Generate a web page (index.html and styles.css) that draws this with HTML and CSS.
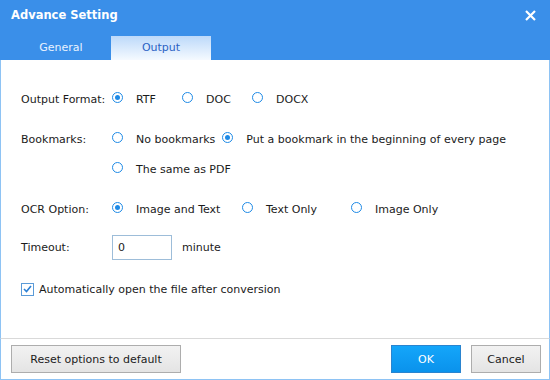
FILE: index.html
```html
<!DOCTYPE html>
<html>
<head>
<meta name="viewport" content="width=device-width, initial-scale=1">
<link rel="stylesheet" href="styles.css">
</head>
<body>
<div class="dialog">
  <div class="header">
    <div class="titlebar">
      <span class="title">Advance Setting</span>
      <svg class="close" width="11" height="11" viewBox="0 0 11 11"><path d="M1 1 L10 10 M10 1 L1 10" stroke="#fff" stroke-width="2.2"/></svg>
    </div>
    <div class="tabs">
      <div class="tab">General</div>
      <div class="tab active">Output</div>
    </div>
  </div>

  <div class="content">
    <div class="row row-format">
      <div class="label">Output Format:</div>
      <div class="opt"><span class="radio checked"></span>RTF</div>
      <div class="opt"><span class="radio"></span>DOC</div>
      <div class="opt"><span class="radio"></span>DOCX</div>
    </div>

    <div class="row row-bookmarks">
      <div class="label">Bookmarks:</div>
      <div class="opt opt-none"><span class="radio"></span>No bookmarks</div>
      <div class="opt"><span class="radio checked"></span>Put a bookmark in the beginning of every page</div>
    </div>
    <div class="row row-sub">
      <div class="label"></div>
      <div class="opt"><span class="radio"></span>The same as PDF</div>
    </div>

    <div class="row row-ocr">
      <div class="label">OCR Option:</div>
      <div class="opt opt-both"><span class="radio checked"></span>Image and Text</div>
      <div class="opt opt-text"><span class="radio"></span>Text Only</div>
      <div class="opt"><span class="radio"></span>Image Only</div>
    </div>

    <div class="row row-timeout">
      <div class="label">Timeout:</div>
      <input class="num" type="text" value="0">
      <span class="unit">minute</span>
    </div>

    <div class="row row-check">
      <span class="check">
        <svg width="9" height="8" viewBox="0 0 9 8"><path d="M1 4 L3.5 6.5 L8 1" stroke="#2a7fd4" stroke-width="1.6" fill="none"/></svg>
      </span>
      Automatically open the file after conversion
    </div>
  </div>

  <div class="footer">
    <button class="btn btn-reset">Reset options to default</button>
    <div class="spacer"></div>
    <button class="btn btn-ok">OK</button>
    <button class="btn btn-cancel">Cancel</button>
  </div>
</div>
</body>
</html>
```

FILE: styles.css
```css
body {
  margin: 0;
  font-family: "DejaVu Sans", sans-serif;
  font-size: 11px;
  color: #1b1b1b;
}
.dialog {
  width: 550px;
  height: 380px;
  display: flex;
  flex-direction: column;
  background: #fff;
}
.header {
  height: 60px;
  background: #3a8fe9;
  display: flex;
  flex-direction: column;
}
.titlebar {
  height: 36px;
  display: flex;
  align-items: center;
  padding: 0 14px 6px 11px;
  box-sizing: border-box;
}
.title {
  color: #fff;
  font-weight: bold;
  font-size: 11.5px;
  flex: 1;
}
.close {
  display: block;
}
.tabs {
  display: flex;
  padding-left: 11px;
  height: 24px;
}
.tab {
  width: 100px;
  text-align: center;
  line-height: 24px;
  color: #e8f2ff;
}
.tab.active {
  background: linear-gradient(#bcd9fa, #f5faff);
  color: #2a62c4;
}
.content {
  flex: 1;
  border-left: 1px solid #8ec3f4;
  border-right: 1px solid #8ec3f4;
  padding: 27px 0 0 20px;
}
.row {
  display: flex;
  align-items: center;
  height: 24px;
  white-space: nowrap;
}
.label {
  width: 91px;
  flex: none;
}
.opt {
  display: flex;
  align-items: center;
}
.radio {
  width: 9px;
  height: 9px;
  border: 1.3px solid #1e8ae6;
  border-radius: 50%;
  margin-right: 13px;
  position: relative;
  top: -2px;
  flex: none;
}
.radio.checked::after {
  content: "";
  position: absolute;
  left: 2px;
  top: 2px;
  width: 5px;
  height: 5px;
  border-radius: 50%;
  background: #1e8ae6;
}
.row-format .opt {
  width: 70px;
}
.row-bookmarks {
  margin-top: 16px;
}
.opt-none {
  margin-right: 7px;
}
.row-sub {
  margin-top: 6px;
}
.row-ocr {
  margin-top: 16px;
}
.opt-both {
  width: 130px;
}
.opt-text {
  width: 109px;
}
.row-timeout {
  margin-top: 14px;
}
.num {
  width: 60px;
  height: 25px;
  box-sizing: border-box;
  border: 1px solid #9dbdd9;
  padding: 0 5px;
  font: inherit;
  color: #1b1b1b;
  margin-right: 10px;
}
.row-check {
  margin-top: 18px;
}
.check {
  width: 11px;
  height: 11px;
  border: 1px solid #5b9bd8;
  display: flex;
  align-items: center;
  justify-content: center;
  margin-right: 5px;
}
.footer {
  height: 42px;
  border: 1px solid #8ec3f4;
  border-top: 1px solid #d9d9d9;
  box-sizing: border-box;
  display: flex;
  align-items: flex-start;
  padding: 6px 8px 0 10px;
}
.spacer {
  flex: 1;
}
.btn {
  height: 28px;
  font: inherit;
  border: 1px solid #adadad;
  background: linear-gradient(#f2f2f2, #e4e4e4);
  color: #1b1b1b;
  padding: 0;
}
.btn-reset {
  width: 170px;
}
.btn-ok {
  width: 70px;
  background: linear-gradient(#14a6fa, #0a92ec);
  border-color: #2a84cf;
  color: #fff;
  margin-right: 10px;
}
.btn-cancel {
  width: 70px;
}
```
